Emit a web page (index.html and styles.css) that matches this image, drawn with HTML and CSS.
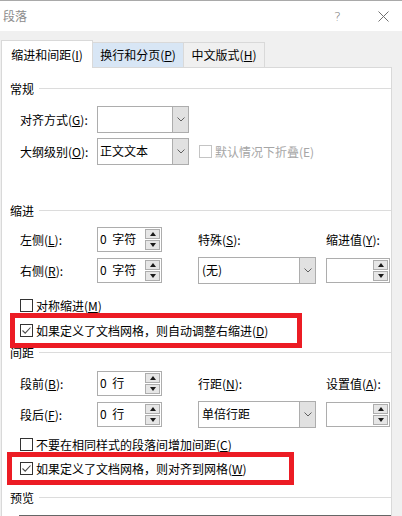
FILE: index.html
```html
<!DOCTYPE html>
<html lang="zh-CN">
<head>
    <meta charset="UTF-8">
    <title>段落</title>
    <link rel="stylesheet" href="styles.css">
</head>
<body>
    <div class="titlebar">
        <span class="title">段落</span>
        <span class="help">?</span>
        <span class="close">
            <svg width="11" height="11" viewBox="0 0 11 11"><path d="M0.5 0.5L10.5 10.5M10.5 0.5L0.5 10.5" stroke="#707070" stroke-width="1" fill="none"/></svg>
        </span>
    </div>

    <div class="tabs">
        <div class="tab active">缩进和间距(<u>I</u>)</div>
        <div class="tab hover">换行和分页(<u>P</u>)</div>
        <div class="tab last">中文版式(<u>H</u>)</div>
    </div>

    <div class="panel">
        <!-- 常规 -->
        <div class="group-head head-general"><span>常规</span><i></i></div>

        <div class="row row-align">
            <span class="lbl">对齐方式(<u>G</u>):</span>
            <div class="combo combo-short">
                <span class="combo-text"></span>
                <span class="combo-arrow"><svg width="8" height="5" viewBox="0 0 8 5"><path d="M0.5 0.5L4 4L7.5 0.5" stroke="#606060" fill="none"/></svg></span>
            </div>
        </div>

        <div class="row row-outline">
            <span class="lbl">大纲级别(<u>O</u>):</span>
            <div class="combo combo-short">
                <span class="combo-text">正文文本</span>
                <span class="combo-arrow"><svg width="8" height="5" viewBox="0 0 8 5"><path d="M0.5 0.5L4 4L7.5 0.5" stroke="#606060" fill="none"/></svg></span>
            </div>
            <div class="check disabled collapse">
                <span class="box"></span>
                <span>默认情况下折叠(E)</span>
            </div>
        </div>

        <!-- 缩进 -->
        <div class="group-head head-indent"><span>缩进</span><i></i></div>

        <div class="grid-row row-left">
            <span class="lbl">左侧(<u>L</u>):</span>
            <div class="spin spin-num">
                <span class="spin-text">0 字符</span>
                <span class="spin-btns"><b class="up"></b><b class="down"></b></span>
            </div>
            <span class="lbl">特殊(<u>S</u>):</span>
            <span class="lbl">缩进值(<u>Y</u>):</span>
        </div>

        <div class="grid-row row-right">
            <span class="lbl">右侧(<u>R</u>):</span>
            <div class="spin spin-num">
                <span class="spin-text">0 字符</span>
                <span class="spin-btns"><b class="up"></b><b class="down"></b></span>
            </div>
            <div class="combo combo-wide">
                <span class="combo-text">(无)</span>
                <span class="combo-arrow"><svg width="8" height="5" viewBox="0 0 8 5"><path d="M0.5 0.5L4 4L7.5 0.5" stroke="#606060" fill="none"/></svg></span>
            </div>
            <div class="spin spin-val">
                <span class="spin-text"></span>
                <span class="spin-btns"><b class="up"></b><b class="down"></b></span>
            </div>
        </div>

        <div class="check row-mirror">
            <span class="box"></span>
            <span>对称缩进(<u>M</u>)</span>
        </div>

        <div class="mark mark-indent">
            <div class="check">
                <span class="box checked"><svg width="11" height="11" viewBox="0 0 11 11"><path d="M1.5 5.5L4.2 8.2L9.5 2.5" stroke="#4a4a4a" stroke-width="1.1" fill="none"/></svg></span>
                <span>如果定义了文档网格，则自动调整右缩进(<u>D</u>)</span>
            </div>
        </div>

        <!-- 间距 -->
        <div class="group-head head-spacing"><span>间距</span><i></i></div>

        <div class="grid-row row-before">
            <span class="lbl">段前(<u>B</u>):</span>
            <div class="spin spin-num">
                <span class="spin-text">0 行</span>
                <span class="spin-btns"><b class="up"></b><b class="down"></b></span>
            </div>
            <span class="lbl">行距(<u>N</u>):</span>
            <span class="lbl">设置值(<u>A</u>):</span>
        </div>

        <div class="grid-row row-after">
            <span class="lbl">段后(<u>F</u>):</span>
            <div class="spin spin-num">
                <span class="spin-text">0 行</span>
                <span class="spin-btns"><b class="up"></b><b class="down"></b></span>
            </div>
            <div class="combo combo-wide">
                <span class="combo-text">单倍行距</span>
                <span class="combo-arrow"><svg width="8" height="5" viewBox="0 0 8 5"><path d="M0.5 0.5L4 4L7.5 0.5" stroke="#606060" fill="none"/></svg></span>
            </div>
            <div class="spin spin-val">
                <span class="spin-text"></span>
                <span class="spin-btns"><b class="up"></b><b class="down"></b></span>
            </div>
        </div>

        <div class="check row-nospace">
            <span class="box"></span>
            <span>不要在相同样式的段落间增加间距(<u>C</u>)</span>
        </div>

        <div class="mark mark-grid">
            <div class="check">
                <span class="box checked"><svg width="11" height="11" viewBox="0 0 11 11"><path d="M1.5 5.5L4.2 8.2L9.5 2.5" stroke="#4a4a4a" stroke-width="1.1" fill="none"/></svg></span>
                <span>如果定义了文档网格，则对齐到网格(<u>W</u>)</span>
            </div>
        </div>

        <!-- 预览 -->
        <div class="group-head head-preview"><span>预览</span><i></i></div>
        <div class="preview"></div>
    </div>
</body>
</html>
```

FILE: styles.css
```css
* {
    margin: 0;
    padding: 0;
    box-sizing: border-box;
}

body {
    width: 402px;
    height: 516px;
    overflow: hidden;
    background-color: #f0f0f0;
    font-family: "Noto Sans CJK SC", sans-serif;
    font-size: 12px;
    color: #000;
}

u {
    text-decoration: underline;
    text-underline-offset: 1px;
}

/* title bar */
.titlebar {
    display: flex;
    align-items: center;
    height: 31px;
    padding-left: 3px;
    background-color: #fff;
    border-top: 1px solid #a9a9a9;
}

.title {
    flex: 1;
    color: #8c8c8c;
    line-height: 16px;
}

.help {
    margin-right: 37px;
    color: #7a7a7a;
    font-family: "DejaVu Sans", sans-serif;
    font-size: 13px;
    font-weight: 300;
}

.close {
    display: flex;
    margin-right: 13px;
}

/* tabs */
.tabs {
    display: flex;
    align-items: flex-end;
    height: 27px;
    margin-top: 9px;
    padding-left: 1px;
}

.tab {
    display: flex;
    align-items: center;
    justify-content: center;
    height: 25px;
    margin-left: -1px;
    border: 1px solid #d9d9d9;
    border-bottom: none;
    background-color: #f0f0f0;
    line-height: 16px;
}

.tab.active {
    position: relative;
    z-index: 1;
    width: 92px;
    height: 28px;
    margin-left: 0;
    margin-bottom: -1px;
    padding-top: 1px;
    background-color: #fff;
}

.tab.hover {
    width: 92px;
    background-color: #d8e6f5;
}

.tab.last {
    width: 82px;
}

/* content panel */
.panel {
    width: 391px;
    height: 449px;
    overflow: hidden;
    margin-left: 1px;
    padding-left: 8px;
    background-color: #fff;
    border: 1px solid #d9d9d9;
    border-bottom: none;
}

.group-head {
    display: flex;
    align-items: center;
    height: 17px;
    line-height: 17px;
}

.group-head i {
    flex: 1;
    height: 1px;
    margin-left: 5px;
    background-color: #dcdcdc;
}

.head-general { margin-top: 12px; }
.head-indent { margin-top: 37px; }
.head-spacing { margin-top: -4px; }
.head-preview { margin-top: 4px; }

.row {
    display: flex;
    align-items: center;
    height: 27px;
    padding-left: 10px;
}

.row .lbl {
    width: 77px;
}

.row-align { margin-top: 9px; }
.row-outline { margin-top: 5px; }

.grid-row {
    display: grid;
    grid-template-columns: 77px 101px 128px 64px;
    align-items: center;
    height: 25px;
    padding-left: 10px;
}

.row-left { margin-top: 8px; }
.row-right { margin-top: 5px; height: 27px; }
.row-before { margin-top: 10px; }
.row-after { margin-top: 5px; height: 27px; }

.lbl {
    line-height: 16px;
    white-space: nowrap;
}

/* combo box */
.combo {
    display: flex;
    height: 27px;
    background-color: #fff;
    border: 1px solid #adadad;
}

.combo-short { width: 92px; }
.combo-wide { width: 118px; }

.combo-text {
    flex: 1;
    padding-left: 2px;
    line-height: 24px;
}

.combo-wide .combo-text {
    padding-left: 3px;
}

.combo-arrow {
    display: flex;
    align-items: center;
    justify-content: center;
    width: 16px;
    background-color: #e1e1e1;
    border-left: 1px solid #adadad;
}

/* spin box */
.spin {
    display: flex;
    height: 25px;
    padding: 1px;
    background-color: #fff;
    border: 1px solid #adadad;
}

.spin-num { width: 65px; }
.spin-val { width: 64px; }

.spin-text {
    flex: 1;
    padding-left: 1px;
    line-height: 20px;
    word-spacing: 3px;
}

.spin-btns {
    display: flex;
    flex-direction: column;
    gap: 1px;
    width: 15px;
}

.spin-btns b {
    display: flex;
    flex: 1;
    align-items: center;
    justify-content: center;
    background-color: #e6e6e6;
    border: 1px solid #adadad;
}

.spin-btns b::before {
    content: "";
    width: 0;
    height: 0;
    border-left: 3px solid transparent;
    border-right: 3px solid transparent;
}

.spin-btns .up::before {
    border-bottom: 4px solid #1a1a1a;
}

.spin-btns .down::before {
    border-top: 4px solid #1a1a1a;
}

/* checkbox */
.check {
    display: flex;
    align-items: center;
    height: 13px;
    line-height: 13px;
    white-space: nowrap;
}

.check .box {
    display: flex;
    align-items: center;
    justify-content: center;
    width: 13px;
    height: 13px;
    margin-right: 3px;
    background-color: #fff;
    border: 1px solid #333;
}

.check.disabled {
    color: #a6a6a6;
}

.check.disabled .box {
    border-color: #c4c4c4;
}

.collapse { margin-left: 10px; }

.row-mirror {
    margin-top: 15px;
    padding-left: 10px;
}

.row-nospace {
    margin-top: 10px;
    padding-left: 10px;
}

/* red annotation frames */
.mark {
    position: relative;
    z-index: 1;
    display: flex;
    align-items: center;
    margin-top: 1px;
    border: 5px solid #ec1c24;
}

.mark-indent {
    width: 292px;
    height: 35px;
    padding-left: 5px;
}

.mark-grid {
    width: 287px;
    height: 33px;
    margin-left: -3px;
    padding-left: 8px;
}

/* preview */
.preview {
    height: 40px;
    margin-top: 9px;
    margin-left: 9px;
    border: 1px solid #666;
}
```
